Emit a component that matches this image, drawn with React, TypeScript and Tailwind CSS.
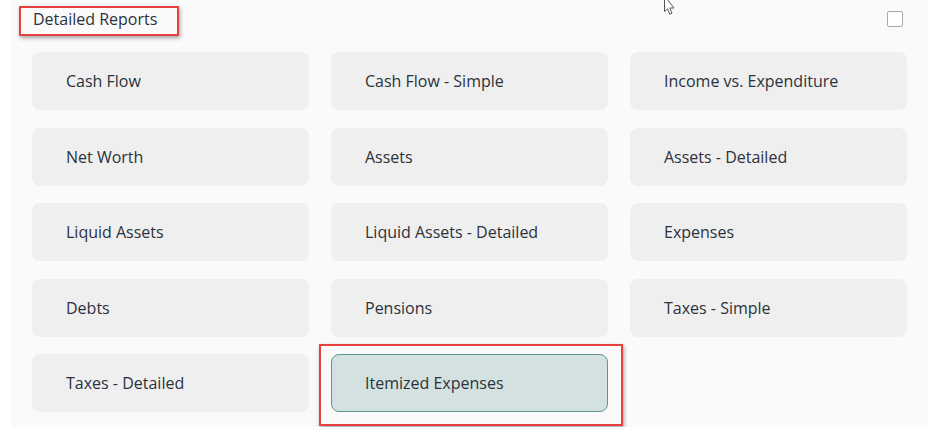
const reports = [
  "Cash Flow",
  "Cash Flow - Simple",
  "Income vs. Expenditure",
  "Net Worth",
  "Assets",
  "Assets - Detailed",
  "Liquid Assets",
  "Liquid Assets - Detailed",
  "Expenses",
  "Debts",
  "Pensions",
  "Taxes - Simple",
  "Taxes - Detailed",
  "Itemized Expenses",
];

const selected = "Itemized Expenses";

export default function App() {
  return (
    <div
      className="w-[940px] h-[427px] bg-white overflow-hidden"
      style={{ fontFamily: '"Open Sans", "Noto Sans", sans-serif' }}
    >
      <div className="relative ml-[11px] w-[917px] h-full bg-[#fafafa] px-[21px]">
        <div className="relative flex items-center justify-between h-[52px] pb-[14px]">
          <div className="relative pl-[1px] text-[16px] leading-6 text-[#2c323c]">
            Detailed Reports
            <div className="absolute -left-[13px] -top-[1px] w-[160px] h-[30px] border-2 border-[#e8403f] shadow-[1px_2px_4px_rgba(0,0,0,0.35)]" />
          </div>
          <div className="w-4 h-4 mr-[4px] border border-[#a9a9a9] rounded-[2px] bg-white" />
          <svg
            className="absolute left-[631px] top-0"
            width="14"
            height="18"
            viewBox="0 0 14 18"
          >
            <path
              d="M1.5 -4 L1.5 11.5 L4.5 8.8 L6.8 14.2 L9 13.2 L6.8 8 L11 8 Z"
              fill="#fff"
              stroke="#555"
              strokeWidth="1"
              strokeLinejoin="round"
            />
          </svg>
        </div>
        <div className="grid grid-cols-3 gap-x-[22px] gap-y-[17.5px]">
          {reports.map((r) =>
            r === selected ? (
              <div key={r} className="relative">
                <div className="h-[58px] flex items-center pl-[33px] rounded-[8px] bg-[#d3e2e0] border border-[#5f948f] text-[16px] text-[#2c323c]">
                  {r}
                </div>
                <div className="absolute -left-[12px] -top-[10px] w-[304px] h-[82px] border-2 border-[#e8403f] shadow-[1px_2px_4px_rgba(0,0,0,0.35)]" />
              </div>
            ) : (
              <div
                key={r}
                className="h-[58px] flex items-center pl-[34px] rounded-[8px] bg-[#efefef] text-[16px] text-[#2c323c]"
              >
                {r}
              </div>
            )
          )}
        </div>
      </div>
    </div>
  );
}
